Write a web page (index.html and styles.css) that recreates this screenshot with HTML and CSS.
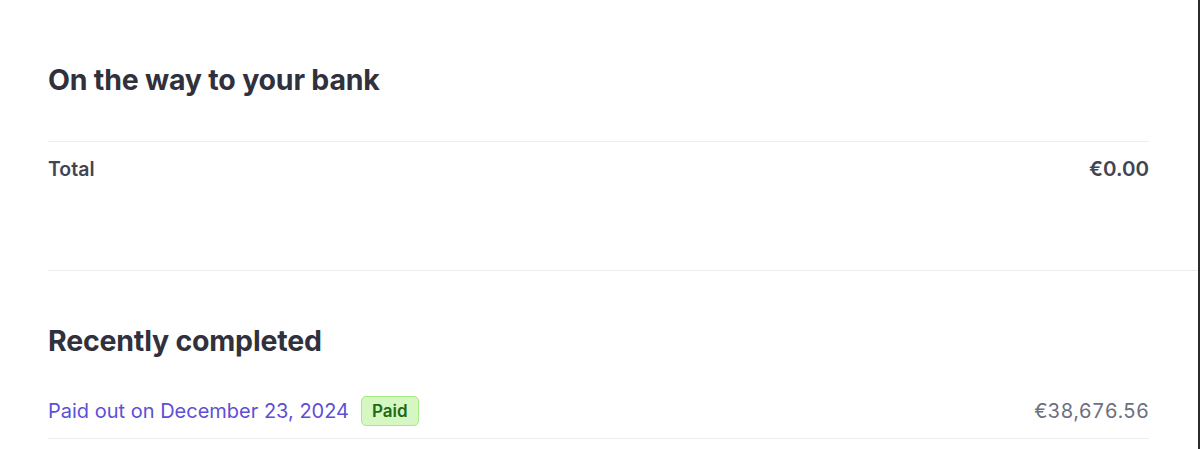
FILE: index.html
```html
<!DOCTYPE html>
<html>
<head>
<meta charset="utf-8">
<link rel="stylesheet" href="styles.css">
</head>
<body>
<div class="page">
  <section class="section">
    <h2 class="title">On the way to your bank</h2>
    <div class="row row-total">
      <span class="label">Total</span>
      <span class="amount-strong">€0.00</span>
    </div>
  </section>
  <div class="full-divider"></div>
  <section class="section">
    <h2 class="title title-2">Recently completed</h2>
    <div class="row row-payout">
      <span class="payout">
        <a class="link">Paid out on December 23, 2024</a>
        <span class="badge">Paid</span>
      </span>
      <span class="amount">€38,676.56</span>
    </div>
  </section>
</div>
</body>
</html>
```
FILE: styles.css
```css
html, body {
  margin: 0;
  padding: 0;
  background: #ffffff;
}
body {
  font-family: Inter, "Noto Sans", "Liberation Sans", sans-serif;
  color: #30313d;
  height: 449px;
  overflow: hidden;
}
.page {
  height: 449px;
  border-right: 2px solid #2b2b2b;
  box-sizing: border-box;
  padding-top: 62px;
}
.section {
  padding-left: 48px;
  padding-right: 49px;
}
.title {
  margin: 0;
  font-size: 28.5px;
  font-weight: 700;
  line-height: 36px;
  letter-spacing: -0.2px;
  color: #30313d;
}
.row {
  display: flex;
  justify-content: space-between;
  align-items: center;
}
.row-total {
  margin-top: 43px;
  border-top: 1px solid #ebeef1;
  padding-top: 15px;
  height: 40px;
  align-items: flex-start;
}
.label {
  font-size: 19.5px;
  font-weight: 600;
  line-height: 24px;
  color: #414552;
}
.amount-strong {
  font-size: 20.5px;
  font-weight: 600;
  line-height: 24px;
  color: #414552;
}
.full-divider {
  margin-top: 73px;
  margin-left: 48px;
  height: 1px;
  background: #ebeef1;
}
.title-2 {
  margin-top: 52px;
}
.row-payout {
  margin-top: 24px;
  height: 56px;
  box-sizing: border-box;
  border-bottom: 1px solid #ebeef1;
}
.payout {
  display: flex;
  align-items: center;
  gap: 12px;
}
.link {
  font-size: 20px;
  color: #5d4fd6;
  line-height: 24px;
}
.badge {
  font-size: 17px;
  font-weight: 600;
  color: #1b6b14;
  background: #d7f7c2;
  border: 1px solid #a6eb84;
  border-radius: 5px;
  padding: 2px 10px;
  line-height: 24px;
}
.amount {
  font-size: 20px;
  font-variant-numeric: tabular-nums;
  color: #6c7080;
  line-height: 24px;
}
```
